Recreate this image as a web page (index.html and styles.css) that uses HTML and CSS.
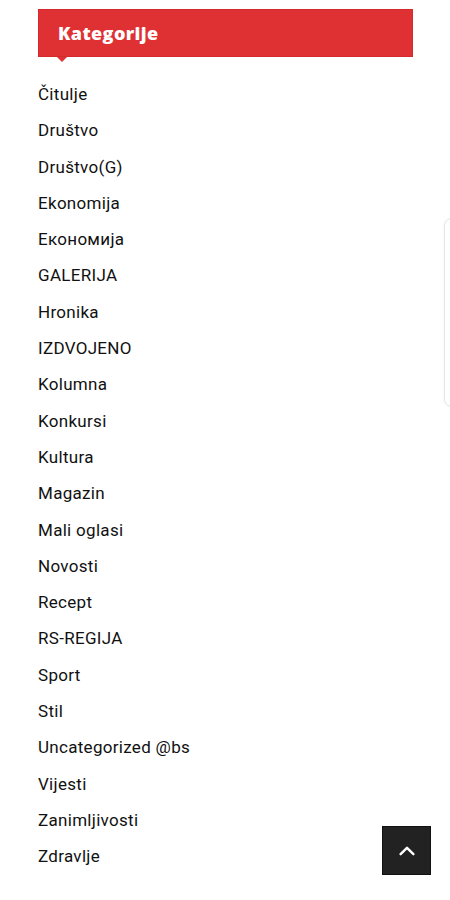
FILE: index.html
```html
<!DOCTYPE html>
<html>
<head>
  <meta charset="utf-8">
  <meta name="viewport" content="width=device-width, initial-scale=1">
  <title>Kategorije</title>
  <link rel="stylesheet" href="styles.css">
</head>
<body>
  <div class="widget">
    <h2 class="widget-title">Kategorije</h2>
    <ul class="cat-list">
      <li><a href="#">Čitulje</a></li>
      <li><a href="#">Društvo</a></li>
      <li><a href="#">Društvo(G)</a></li>
      <li><a href="#">Ekonomija</a></li>
      <li><a href="#">Економија</a></li>
      <li><a href="#">GALERIJA</a></li>
      <li><a href="#">Hronika</a></li>
      <li><a href="#">IZDVOJENO</a></li>
      <li><a href="#">Kolumna</a></li>
      <li><a href="#">Konkursi</a></li>
      <li><a href="#">Kultura</a></li>
      <li><a href="#">Magazin</a></li>
      <li><a href="#">Mali oglasi</a></li>
      <li><a href="#">Novosti</a></li>
      <li><a href="#">Recept</a></li>
      <li><a href="#">RS-REGIJA</a></li>
      <li><a href="#">Sport</a></li>
      <li><a href="#">Stil</a></li>
      <li><a href="#">Uncategorized @bs</a></li>
      <li><a href="#">Vijesti</a></li>
      <li><a href="#">Zanimljivosti</a></li>
      <li><a href="#">Zdravlje</a></li>
    </ul>
  </div>

  <div class="side-panel"></div>

  <a href="#" class="to-top">
    <svg width="22" height="22" viewBox="0 0 24 24" fill="none" stroke="#fff" stroke-width="2.6" stroke-linecap="round" stroke-linejoin="round">
      <polyline points="5,15.5 12,8.5 19,15.5"></polyline>
    </svg>
  </a>
</body>
</html>
```

FILE: styles.css
```css
body {
  margin: 0;
  padding: 0;
  font-family: Roboto, "Liberation Sans", Arial, sans-serif;
  background-color: #fff;
  color: #111;
}

.widget {
  width: 375px;
  margin-left: 38px;
  padding-top: 9px;
}

.widget-title {
  position: relative;
  margin: 0;
  height: 48px;
  padding-left: 19px;
  display: flex;
  align-items: center;
  background-color: #df3033;
  border: 1px solid #d22a2d;
  box-sizing: border-box;
  color: #fff;
  font-family: "Open Sans", Roboto, sans-serif;
  font-size: 18px;
  font-weight: 800;
  letter-spacing: 0.4px;
}

.widget-title::after {
  content: "";
  position: absolute;
  left: 18px;
  bottom: -6px;
  border-left: 5px solid transparent;
  border-right: 5px solid transparent;
  border-top: 5px solid #df3033;
}

.cat-list {
  list-style: none;
  margin: 19px 0 0 0;
  padding: 0;
}

.cat-list li {
  line-height: 36.3px;
  font-size: 17px;
  letter-spacing: 0.3px;
}

.cat-list a {
  color: #111;
  text-decoration: none;
}

.side-panel {
  position: fixed;
  left: 444px;
  top: 218px;
  width: 40px;
  height: 187px;
  border: 1px solid #e6e6e6;
  border-radius: 8px;
  background: #fff;
  box-shadow: 0 0 3px rgba(0, 0, 0, 0.06);
}

.to-top {
  position: fixed;
  left: 382px;
  top: 826px;
  width: 49px;
  height: 49px;
  background-color: #222;
  border: 1px solid #111;
  box-sizing: border-box;
  display: flex;
  align-items: center;
  justify-content: center;
}
```
